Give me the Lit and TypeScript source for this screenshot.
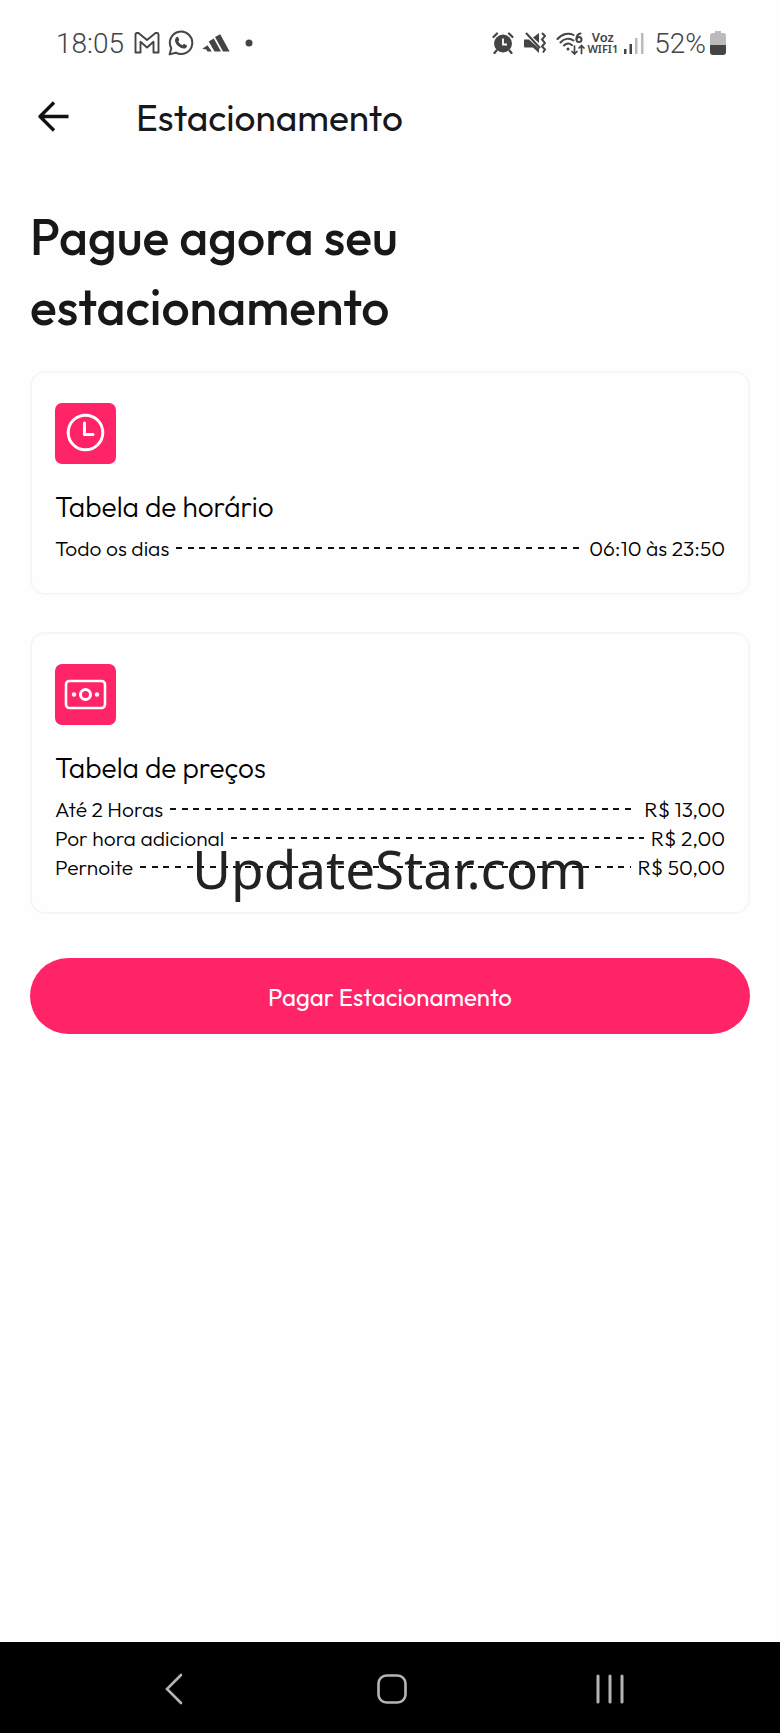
import { LitElement, html, css, svg } from "lit";
import { customElement, property } from "lit/decorators.js";

interface Row {
  label: string;
  value: string;
}

const clockIcon = svg`<svg viewBox="0 0 60 60" width="60" height="60" fill="none" stroke="#fff" stroke-width="3" stroke-linecap="round" stroke-linejoin="round" aria-hidden="true">
  <circle cx="30.500" cy="29.500" r="17.300"/><path d="M29.500 20v11.500h8.500"/></svg>`;

const moneyIcon = svg`<svg viewBox="0 0 60 60" width="60" height="60" fill="none" stroke="#fff" aria-hidden="true">
  <rect x="11" y="17" width="39" height="27" rx="3.500" stroke-width="2.600"/>
  <circle cx="30.500" cy="30.500" r="5" stroke-width="3"/>
  <circle cx="19" cy="30.500" r="2.200" fill="#fff" stroke="none"/><circle cx="42" cy="30.500" r="2.200" fill="#fff" stroke="none"/></svg>`;

@customElement("status-bar")
class StatusBar extends LitElement {
  static styles = css`
    :host {
      display: flex;
      justify-content: space-between;
      align-items: center;
      height: 86px;
      padding: 0 54px 0 56px;
      box-sizing: border-box;
      color: #444;
      font-family: Roboto, sans-serif;
      font-size: 28px;
      font-weight: 300;
    }
    .group {
      display: flex;
      align-items: center;
      gap: 8px;
    }
    .right {
      gap: 10px;
    }
    .time {
      margin-right: 2px;
    }
    .voice {
      display: grid;
      justify-items: center;
      font: 600 11px/11px "Noto Sans", sans-serif;
      margin-left: -10px;
    }
    .voice .big {
      font-size: 13px;
    }
    .signal {
      margin-left: -4px;
    }
    .level {
      display: flex;
      align-items: center;
      gap: 4px;
    }
    svg {
      display: block;
    }
  `;

  render() {
    return html`
      <div class="group">
        <span class="time">18:05</span>
        <svg width="26" height="22" viewBox="0 0 26 22" fill="none" stroke="#444" stroke-width="1.900" stroke-linejoin="round" aria-hidden="true">
          <path d="M1.500 2.500Q1.500 1 3 1H4.500L13 8l8.500-7H23q1.500 0 1.500 1.500V20.500H19.500V9.800L13 15.500 6.500 9.800V20.500h-5z"/>
        </svg>
        <svg width="26" height="26" viewBox="0 0 26 26" aria-hidden="true">
          <path d="M1.600 24.400l1.700-6.100A11.200 11.200 0 1 1 7.800 22.700z" fill="none" stroke="#444" stroke-width="2" stroke-linejoin="round"/>
          <path d="M8.300 7.200c.6-.6 1.500-.7 1.900.1l1 2.300c.2.500-.1 1-.9 1.900.9 1.800 2.300 3 4.200 3.800.7-.7 1.100-1.500 1.700-1.200l2.500 1.200c.8.400-.1 2.300-1.100 2.900-1.400.8-3.300.3-5.400-.8-2.400-1.300-4.300-3.600-4.900-5.400-.6-1.900-.2-3.600 1-4.800z" fill="#444"/>
        </svg>
        <svg width="28" height="18" viewBox="0 0 28 18" fill="#444" aria-hidden="true">
          <path d="M13 3L18.200.3 27.600 17.500H21zM6.700 7.500L11.800 4.500 19 17.500H12.500zM.3 14.800L5.500 11.300 9.800 17.500H5.500l-1.200-2z"/>
        </svg>
        <svg width="22" height="8" viewBox="0 0 22 8" fill="#444" aria-hidden="true"><circle cx="11" cy="4" r="3.500"/></svg>
      </div>
      <div class="group right">
        <svg width="22" height="22" viewBox="0 0 22 22" aria-hidden="true">
          <circle cx="11" cy="11.500" r="9" fill="#444"/>
          <path d="M1.500 5l3.500-3.500M20.500 5L17 1.500M4.500 18.500l-2 2.500M17.500 18.500l2 2.500" stroke="#444" stroke-width="2.200" stroke-linecap="round"/>
          <path d="M11 6.500v6h4" fill="none" stroke="#fff" stroke-width="1.800"/>
        </svg>
        <svg width="22" height="22" viewBox="0 0 22 22" aria-hidden="true">
          <path d="M0 7.500h5L15 16.500V21l-6-5.500H1Q0 15.500 0 14.500zM9 5.500L15 1v10z" fill="#444"/>
          <path d="M2 1l14 15" stroke="#444" stroke-width="2"/>
          <path d="M18 1l3 3-3 3.500 3 3.500-3 3.500 3 3-2 3" fill="none" stroke="#444" stroke-width="2"/>
        </svg>
        <svg width="31" height="23" viewBox="0 0 31 23" fill="none" stroke="#444" stroke-width="2" stroke-linecap="round" aria-hidden="true">
          <path d="M1.500 7C6 1.500 13 .5 17.500 3M4.500 10.500C8 6.500 13.500 5.500 17.500 8.500M8 13.500c2.500-2.500 5.500-2.500 8-.3"/>
          <circle cx="12" cy="17" r="1.500" fill="#444" stroke="none"/>
          <path d="M24.500 1.500c-2.500.500-4 3-4 5.500"/><circle cx="23" cy="7.500" r="2.500"/>
          <path d="M18.500 14v7.500M16 19.500l2.500 2.500 2.500-2.500M25.500 21.500V14M23 16l2.500-2.500L28 16" stroke-width="1.700"/>
        </svg>
        <span class="voice"><span class="big">Voz</span><span>WIFI1</span></span>
        <svg class="signal" width="20" height="22" viewBox="0 0 20 22" aria-hidden="true">
          <path d="M0 17h2.500v5H0zM5.500 12H8v10H5.500z" fill="#444"/>
          <path d="M11 6h2.500v16H11zM17 1h2.500v21H17z" fill="#bbb"/>
        </svg>
        <span class="level">
          <span>52%</span>
          <svg width="16" height="24" viewBox="0 0 16 24" aria-hidden="true">
            <path d="M5 0h6v2h2.500Q16 2 16 5v9H0V5Q0 2 2.500 2H5z" fill="#bbb"/>
            <path d="M0 14h16v7q0 3-3 3H3q-3 0-3-3z" fill="#444"/>
          </svg>
        </span>
      </div>
    `;
  }
}

@customElement("info-card")
class InfoCard extends LitElement {
  @property() heading = "";
  @property({ attribute: false }) icon: unknown;
  @property({ attribute: false }) rows: Row[] = [];

  static styles = css`
    :host {
      display: block;
      position: relative;
      box-sizing: border-box;
      padding: 30px 23px 22px;
      border: 2px solid #f6f6f6;
      border-radius: 15px;
      color: #000;
    }
    .tile {
      width: 61px;
      height: 61px;
      border-radius: 7px;
      background: #ff2368;
    }
    svg {
      display: block;
    }
    h2 {
      margin: 25px 0 9px;
      font-size: 28px;
      font-weight: 300;
      line-height: 36px;
    }
    dl {
      margin: 0;
      padding-bottom: 8px;
    }
    .row {
      display: flex;
      gap: 7px;
      font-size: 21px;
      font-weight: 300;
      line-height: 29px;
    }
    dt,
    dd {
      margin: 0;
    }
    .leader {
      flex: 1;
      height: 2px;
      margin-top: 13px;
      background: repeating-linear-gradient(
        90deg,
        #111 0 6px,
        transparent 6px 12px,
        #111 12px 18px,
        transparent 18px 23px,
        #111 23px 29px,
        transparent 29px 35px
      );
    }
  `;

  render() {
    return html`
      <div class="tile">${this.icon}</div>
      <h2>${this.heading}</h2>
      <dl>
        ${this.rows.map(
          (row) => html`<div class="row">
            <dt>${row.label}</dt>
            <span class="leader" role="presentation"></span>
            <dd>${row.value}</dd>
          </div>`
        )}
      </dl>
      <slot></slot>
    `;
  }
}

@customElement("app-root")
class AppRoot extends LitElement {
  static styles = css`
    :host {
      display: flex;
      flex-direction: column;
      min-height: 100vh;
      background: #fefefe;
      color: #17181a;
      font-family: Outfit, Lato, sans-serif;
    }
    header {
      display: flex;
      align-items: center;
      gap: 62px;
      height: 64px;
      padding-left: 34px;
    }
    button {
      border: 0;
      padding: 0;
      background: none;
      color: inherit;
      font: inherit;
      cursor: pointer;
    }
    svg {
      display: block;
    }
    .title {
      font-size: 37px;
      line-height: 48px;
    }
    main {
      flex: 1;
      padding: 52px 30px 40px;
    }
    h1 {
      max-width: 480px;
      margin: 0 0 29px;
      font-size: 50px;
      font-weight: 500;
      line-height: 70px;
    }
    .cards {
      display: grid;
      gap: 37px;
    }
    .watermark {
      position: absolute;
      left: 0;
      right: 0;
      bottom: 6px;
      text-align: center;
      color: #222;
      font: 53px/74px "Noto Sans", sans-serif;
      pointer-events: none;
    }
    .pay {
      display: block;
      width: 100%;
      height: 76px;
      margin-top: 44px;
      padding-top: 2px;
      border-radius: 38px;
      background: #ff2368;
      color: #fff;
      font-size: 24px;
    }
    nav {
      display: flex;
      justify-content: space-around;
      align-items: center;
      height: 91px;
      padding: 2px 61px 0 65px;
      box-sizing: border-box;
      background: #000;
    }
    nav button {
      display: grid;
      place-items: center;
      width: 64px;
      height: 64px;
    }
  `;

  render() {
    return html`
      <status-bar></status-bar>
      <header>
        <button aria-label="Voltar">
          <svg width="40" height="40" viewBox="0 0 40 40" fill="none" stroke="#111" stroke-width="3.400" stroke-linejoin="round" aria-hidden="true"><path d="M34.500 18.500H6M20 4.500L6 18.500l14 14"/></svg>
        </button>
        <div class="title">Estacionamento</div>
      </header>
      <main>
        <h1>Pague agora seu estacionamento</h1>
        <div class="cards">
          <info-card
            heading="Tabela de horário"
            .icon=${clockIcon}
            .rows=${[{ label: "Todo os dias", value: "06:10 às 23:50" }]}
          ></info-card>
          <info-card
            heading="Tabela de preços"
            .icon=${moneyIcon}
            .rows=${[
              { label: "Até 2 Horas", value: "R$ 13,00" },
              { label: "Por hora adicional", value: "R$ 2,00" },
              { label: "Pernoite", value: "R$ 50,00" },
            ]}
          ><span class="watermark">UpdateStar.com</span></info-card>
        </div>
        <button class="pay">Pagar Estacionamento</button>
      </main>
      <nav>
        <button aria-label="Voltar">
          <svg width="32" height="32" viewBox="0 0 32 32" fill="none" stroke="#b5b5b5" stroke-width="2.600" stroke-linecap="round" aria-hidden="true"><path d="M23 2L9 16l14 14"/></svg>
        </button>
        <button aria-label="Início">
          <svg width="32" height="32" viewBox="0 0 32 32" fill="none" stroke="#b5b5b5" stroke-width="2.600" aria-hidden="true"><rect x="2.500" y="2.500" width="27" height="27" rx="8"/></svg>
        </button>
        <button aria-label="Recentes">
          <svg width="32" height="32" viewBox="0 0 32 32" stroke="#b5b5b5" stroke-width="3" stroke-linecap="round" aria-hidden="true"><path d="M4 3v26M16 3v26M28 3v26"/></svg>
        </button>
      </nav>
    `;
  }
}
